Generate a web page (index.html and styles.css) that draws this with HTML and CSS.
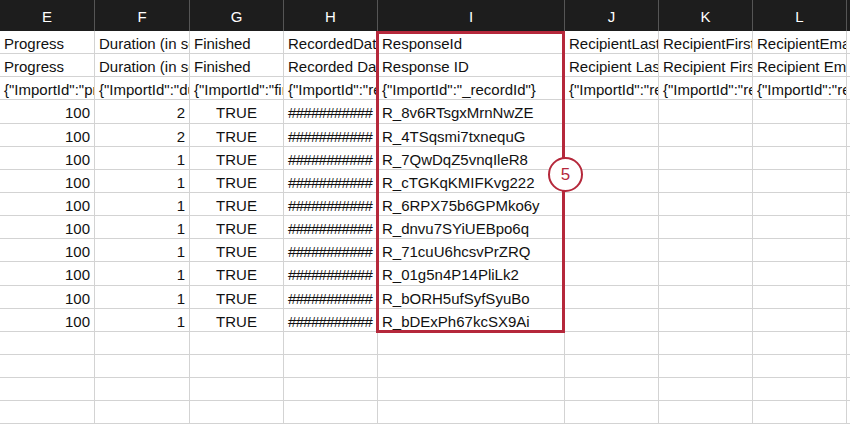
FILE: index.html
```html
<!DOCTYPE html>
<html>
<head>
<meta charset="utf-8">
<link rel="stylesheet" href="styles.css">
</head>
<body>
<div class="wrap">
  <div class="sheet">
    <div class="h">E</div><div class="h">F</div><div class="h">G</div><div class="h">H</div><div class="h">I</div><div class="h">J</div><div class="h">K</div><div class="h">L</div><div class="h">M</div>

    <div class="c">Progress</div><div class="c">Duration (in seconds)</div><div class="c">Finished</div><div class="c">RecordedDate</div><div class="c">ResponseId</div><div class="c">RecipientLastName</div><div class="c">RecipientFirstName</div><div class="c">RecipientEmail</div><div class="c">ExternalReference</div>

    <div class="c">Progress</div><div class="c">Duration (in seconds)</div><div class="c">Finished</div><div class="c">Recorded Date</div><div class="c">Response ID</div><div class="c">Recipient Last Name</div><div class="c">Recipient First Name</div><div class="c">Recipient Email</div><div class="c">External Data Reference</div>

    <div class="c">{"ImportId":"progress"}</div><div class="c">{"ImportId":"duration"}</div><div class="c">{"ImportId":"finished"}</div><div class="c">{"ImportId":"recordedDate"}</div><div class="c">{"ImportId":"_recordId"}</div><div class="c">{"ImportId":"recipientLastName"}</div><div class="c">{"ImportId":"recipientFirstName"}</div><div class="c">{"ImportId":"recipientEmail"}</div><div class="c">{"ImportId":"externalDataReference"}</div>

    <div class="c num">100</div><div class="c num">2</div><div class="c ctr">TRUE</div><div class="c hash">###########</div><div class="c">R_8v6RTsgxMrnNwZE</div><div class="c"></div><div class="c"></div><div class="c"></div><div class="c"></div>
    <div class="c num">100</div><div class="c num">2</div><div class="c ctr">TRUE</div><div class="c hash">###########</div><div class="c">R_4TSqsmi7txnequG</div><div class="c"></div><div class="c"></div><div class="c"></div><div class="c"></div>
    <div class="c num">100</div><div class="c num">1</div><div class="c ctr">TRUE</div><div class="c hash">###########</div><div class="c">R_7QwDqZ5vnqIleR8</div><div class="c"></div><div class="c"></div><div class="c"></div><div class="c"></div>
    <div class="c num">100</div><div class="c num">1</div><div class="c ctr">TRUE</div><div class="c hash">###########</div><div class="c">R_cTGKqKMIFKvg222</div><div class="c"></div><div class="c"></div><div class="c"></div><div class="c"></div>
    <div class="c num">100</div><div class="c num">1</div><div class="c ctr">TRUE</div><div class="c hash">###########</div><div class="c">R_6RPX75b6GPMko6y</div><div class="c"></div><div class="c"></div><div class="c"></div><div class="c"></div>
    <div class="c num">100</div><div class="c num">1</div><div class="c ctr">TRUE</div><div class="c hash">###########</div><div class="c">R_dnvu7SYiUEBpo6q</div><div class="c"></div><div class="c"></div><div class="c"></div><div class="c"></div>
    <div class="c num">100</div><div class="c num">1</div><div class="c ctr">TRUE</div><div class="c hash">###########</div><div class="c">R_71cuU6hcsvPrZRQ</div><div class="c"></div><div class="c"></div><div class="c"></div><div class="c"></div>
    <div class="c num">100</div><div class="c num">1</div><div class="c ctr">TRUE</div><div class="c hash">###########</div><div class="c">R_01g5n4P14PliLk2</div><div class="c"></div><div class="c"></div><div class="c"></div><div class="c"></div>
    <div class="c num">100</div><div class="c num">1</div><div class="c ctr">TRUE</div><div class="c hash">###########</div><div class="c">R_bORH5ufSyfSyuBo</div><div class="c"></div><div class="c"></div><div class="c"></div><div class="c"></div>
    <div class="c num">100</div><div class="c num">1</div><div class="c ctr">TRUE</div><div class="c hash">###########</div><div class="c">R_bDExPh67kcSX9Ai</div><div class="c"></div><div class="c"></div><div class="c"></div><div class="c"></div>

    <div class="c"></div><div class="c"></div><div class="c"></div><div class="c"></div><div class="c"></div><div class="c"></div><div class="c"></div><div class="c"></div><div class="c"></div>
    <div class="c"></div><div class="c"></div><div class="c"></div><div class="c"></div><div class="c"></div><div class="c"></div><div class="c"></div><div class="c"></div><div class="c"></div>
    <div class="c"></div><div class="c"></div><div class="c"></div><div class="c"></div><div class="c"></div><div class="c"></div><div class="c"></div><div class="c"></div><div class="c"></div>
    <div class="c"></div><div class="c"></div><div class="c"></div><div class="c"></div><div class="c"></div><div class="c"></div><div class="c"></div><div class="c"></div><div class="c"></div>
  </div>
  <div class="highlight"></div>
  <div class="badge">5</div>
</div>
</body>
</html>
```

FILE: styles.css
```css
html, body {
  margin: 0;
  padding: 0;
  background: #ffffff;
  overflow: hidden;
}

.wrap {
  position: relative;
  width: 850px;
  height: 425px;
  overflow: hidden;
  font-family: "Liberation Sans", Arial, sans-serif;
}

.sheet {
  display: grid;
  grid-template-columns: 95px 95px 94px 94px 187px 94px 94px 94px 60px;
  grid-template-rows: 31px repeat(17, 23.15px);
}

.h {
  box-sizing: border-box;
  background: #1d1d1d;
  color: #ffffff;
  font-size: 15px;
  display: flex;
  align-items: center;
  justify-content: center;
  border-right: 1px solid #555555;
  padding-top: 2px;
}

.c {
  box-sizing: border-box;
  border-right: 1px solid #d3d3d3;
  border-bottom: 1px solid #d3d3d3;
  font-size: 15px;
  color: #111111;
  white-space: nowrap;
  overflow: hidden;
  display: flex;
  align-items: center;
  padding: 3px 4px 0 4px;
}

.num {
  justify-content: flex-end;
  padding-right: 4px;
}

.ctr {
  justify-content: center;
}

.hash {
  letter-spacing: -0.7px;
}

.highlight {
  position: absolute;
  left: 376px;
  top: 31px;
  width: 189px;
  height: 302px;
  box-sizing: border-box;
  border: 3px solid #b5283b;
}

.badge {
  position: absolute;
  left: 548px;
  top: 157px;
  width: 35px;
  height: 35px;
  box-sizing: border-box;
  border: 2px solid #b5283b;
  border-radius: 50%;
  background: #ffffff;
  color: #b5283b;
  font-size: 17px;
  display: flex;
  align-items: center;
  justify-content: center;
  padding-top: 1px;
}
```
